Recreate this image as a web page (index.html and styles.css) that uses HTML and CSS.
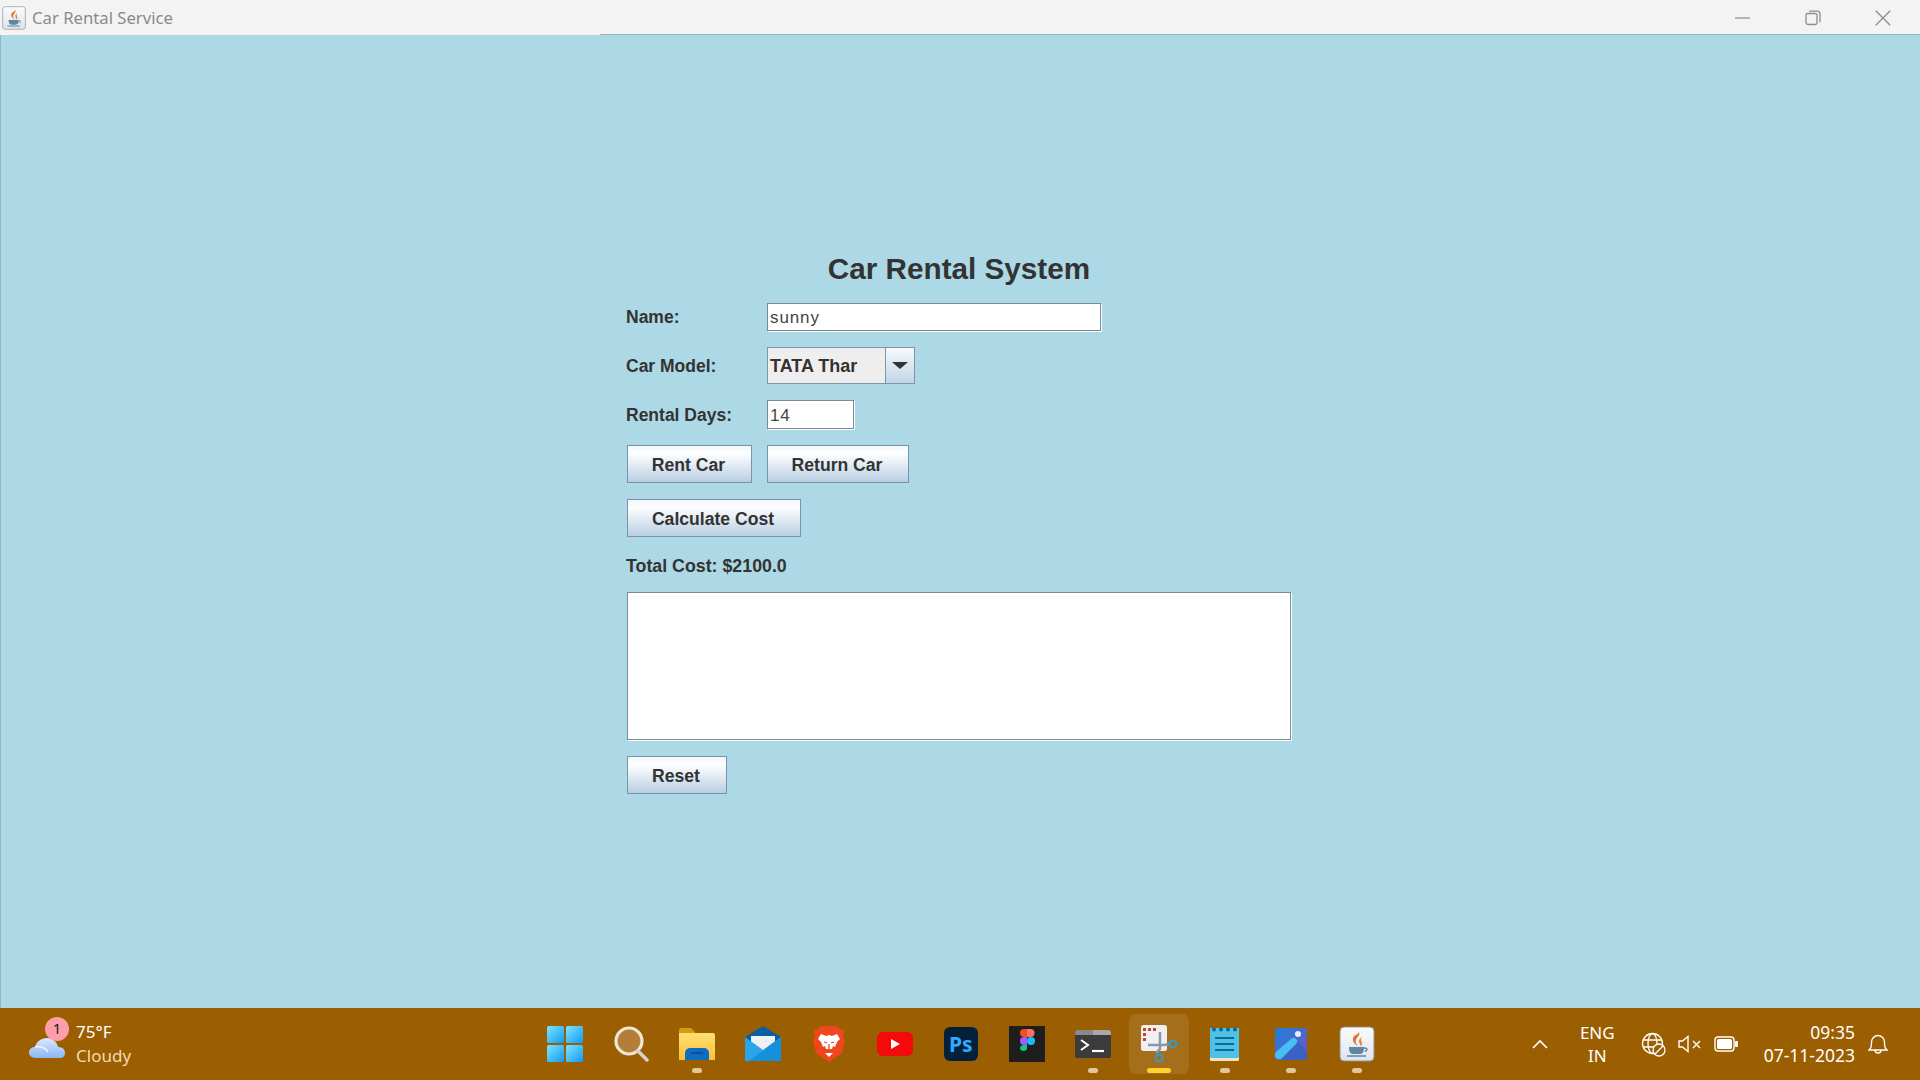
FILE: index.html
```html
<!DOCTYPE html>
<html lang="en">
<head>
  <meta charset="UTF-8">
  <title>Car Rental Service</title>
  <link rel="stylesheet" href="styles.css">
</head>
<body>
  <svg class="defs" width="0" height="0">
    <defs>
      <linearGradient id="javaBg" x1="0" y1="0" x2="0" y2="1"><stop offset="0" stop-color="#fbfbfb"/><stop offset="1" stop-color="#dfe3ea"/></linearGradient>
      <linearGradient id="startBlue" x1="0" y1="0" x2="1" y2="1"><stop offset="0" stop-color="#7fe3ff"/><stop offset="1" stop-color="#0f9bf2"/></linearGradient>
      <linearGradient id="folder" x1="0" y1="0" x2="0" y2="1"><stop offset="0" stop-color="#ffdf72"/><stop offset="1" stop-color="#fbc13a"/></linearGradient>
      <linearGradient id="photoBg" x1="0" y1="0" x2="1" y2="1"><stop offset="0" stop-color="#1f7fdc"/><stop offset="1" stop-color="#6f55c0"/></linearGradient>
      <linearGradient id="cloud" x1="0" y1="0" x2="0" y2="1"><stop offset="0" stop-color="#dbe8ff"/><stop offset="1" stop-color="#8db6f5"/></linearGradient>
      <symbol id="java" viewBox="0 0 36 36">
        <rect x="1" y="1" width="34" height="34" rx="4" fill="url(#javaBg)" stroke="#8b8f96"/>
        <path d="M20 6c2 4-5 6-3 11 1 2 2 3 2 3-2-1-6-4-5-8 .8-3 5-3 6-6z" fill="#e2702a"/>
        <path d="M23 11c-3 2-4 4-2 7 .5 1 .3 2-.5 2.500 2-.5 3.500-2.500 2-5-.7-1.500-.4-3 .5-4.500z" fill="#e8863c"/>
        <path d="M10 21h15v2c0 3-2 5-4 5h-7c-2 0-4-2-4-5z" fill="#5f86a3"/>
        <path d="M25 22c3-.5 4 2 1 3.500" fill="none" stroke="#5f86a3" stroke-width="1.500"/>
        <path d="M8 30h19" stroke="#5f86a3" stroke-width="1.500"/>
      </symbol>
    </defs>
  </svg>

  <header class="title-bar">
    <div class="title-left">
      <svg class="title-icon" width="24" height="24"><use href="#java"/></svg>
      <span class="title-text">Car Rental Service</span>
    </div>
    <div class="window-btns">
      <svg width="16" height="16" viewBox="0 0 16 16"><path d="M0 8h15" stroke="#8d8d8d" stroke-width="1.200"/></svg>
      <svg width="16" height="16" viewBox="0 0 16 16" fill="none" stroke="#8d8d8d" stroke-width="1.300"><rect x="1" y="3.500" width="11" height="11" rx="2"/><path d="M4 1.200h8a3 3 0 0 1 3 3v8"/></svg>
      <svg width="16" height="16" viewBox="0 0 16 16"><path d="M.8.800l14.400 14.400M15.200.800L.8 15.200" stroke="#8d8d8d" stroke-width="1.300"/></svg>
    </div>
  </header>

  <main class="app">
    <form class="rental-form">
      <h1 class="heading">Car Rental System</h1>

      <div class="row">
        <label class="label" for="name">Name:</label>
        <input class="field field-name" id="name" type="text" value="sunny">
      </div>

      <div class="row">
        <span class="label">Car Model:</span>
        <div class="combo">
          <span class="combo-value">TATA Thar</span>
          <span class="combo-arrow"><span class="triangle"></span></span>
        </div>
      </div>

      <div class="row">
        <label class="label" for="days">Rental Days:</label>
        <input class="field field-days" id="days" type="text" value="14">
      </div>

      <div class="row btn-row">
        <button type="button" class="btn btn-rent">Rent Car</button>
        <button type="button" class="btn btn-return">Return Car</button>
      </div>

      <div class="row">
        <button type="button" class="btn btn-calc">Calculate Cost</button>
      </div>

      <div class="total">Total Cost: $2100.0</div>

      <textarea class="output"></textarea>

      <div class="row">
        <button type="button" class="btn btn-reset">Reset</button>
      </div>
    </form>
  </main>

  <footer class="taskbar">
    <div class="weather">
      <div class="weather-icon">
        <svg width="38" height="24" viewBox="0 0 38 24"><path d="M8 23C3 23 1 20 1 17.500 1 14 4 12 7 12 8 7 13 3 19 3c6 0 10 4 11 9 4 0 7 2 7 6 0 3-2 5-5 5z" fill="url(#cloud)"/><path d="M7 12c5-1 10 0 13 5" fill="none" stroke="#eef4ff" stroke-width="1.500"/></svg>
        <span class="badge">1</span>
      </div>
      <div class="weather-text">
        <span class="temp">75°F</span>
        <span class="cond">Cloudy</span>
      </div>
    </div>

    <div class="task-icons">
      <div class="task">
        <svg width="36" height="36" viewBox="0 0 36 36" fill="url(#startBlue)"><rect x="0" y="0" width="17" height="17" rx="1.500"/><rect x="19" y="0" width="17" height="17" rx="1.500"/><rect x="0" y="19" width="17" height="17" rx="1.500"/><rect x="19" y="19" width="17" height="17" rx="1.500"/></svg>
      </div>
      <div class="task">
        <svg width="36" height="36" viewBox="0 0 36 36"><circle cx="16" cy="15" r="13" fill="#b37f38" stroke="#eee6da" stroke-width="3.200"/><path d="M25 25l9 9" stroke="#d9d2c6" stroke-width="3.500" stroke-linecap="round"/></svg>
      </div>
      <div class="task">
        <svg width="36" height="36" viewBox="0 0 36 36"><path d="M0 4a2 2 0 0 1 2-2h10l4 4v4H0z" fill="#d99a10"/><path d="M0 7h34a2 2 0 0 1 2 2v25H0z" fill="url(#folder)"/><path d="M6 34v-7a5 5 0 0 1 5-5h14a5 5 0 0 1 5 5v7z" fill="#0f6cc4"/><path d="M12 27h12" stroke="#0a4a8a" stroke-width="1.500"/></svg>
        <span class="dot"></span>
      </div>
      <div class="task">
        <svg width="36" height="36" viewBox="0 0 36 36"><path d="M0 11L18 0l18 11v6H0z" fill="#0a5ea8"/><path d="M6 10h24v12L18 26 6 22z" fill="#eef1f4"/><path d="M0 11l18 13 18-13v24H0z" fill="#2aa4ea"/><path d="M36 35H4l32-24z" fill="#1590dc"/></svg>
      </div>
      <div class="task">
        <svg width="32" height="36" viewBox="0 0 32 36"><path d="M8 0h16l4 4 4-1-2 7 2 4-3 13-13 9-13-9L0 14l2-4-2-7 4 1z" fill="#f0461e"/><path d="M8 8l5 2 3-1 3 1 5-2 3 5-3 3-2 5-2-1-1 3h-6l-1-3-2 1-2-5-3-3z" fill="#fff"/><path d="M11 16l3 1M21 16l-3 1M16 18v5" stroke="#f0461e" stroke-width="1.300"/><path d="M12 27h8l-4 4z" fill="#fff"/></svg>
      </div>
      <div class="task">
        <svg width="36" height="24" viewBox="0 0 36 24"><rect width="36" height="24" rx="6" fill="#f40a0a"/><path d="M14 7l9 5-9 5z" fill="#fff"/></svg>
      </div>
      <div class="task">
        <svg width="34" height="34" viewBox="0 0 34 34"><rect width="34" height="34" rx="6" fill="#04203b"/><text class="ps" x="5" y="25">Ps</text></svg>
      </div>
      <div class="task">
        <svg width="36" height="36" viewBox="0 0 36 36"><rect width="36" height="36" fill="#1e1e1e"/><path d="M11 7a4 4 0 0 1 4-4h3v8h-3a4 4 0 0 1-4-4z" fill="#f24e1e"/><path d="M18 3h3.500a4 4 0 0 1 0 8H18z" fill="#ff7262"/><path d="M11 15a4 4 0 0 1 4-4h3v8h-3a4 4 0 0 1-4-4z" fill="#a259ff"/><circle cx="22" cy="15" r="4" fill="#1abcfe"/><path d="M11 23a4 4 0 0 1 4-4h3v4a4 4 0 0 1-7 0z" fill="#0acf83"/></svg>
      </div>
      <div class="task">
        <svg width="36" height="28" viewBox="0 0 36 28"><rect width="36" height="28" rx="2.500" fill="#3b3b3b"/><path d="M0 2.500A2.500 2.500 0 0 1 2.500 0H18v5H0z" fill="#8a8a8a"/><path d="M18 0h15.500A2.500 2.500 0 0 1 36 2.500V5H18z" fill="#a8a8a8"/><path d="M6 10l7 5-7 5" fill="none" stroke="#fff" stroke-width="2"/><path d="M17 21h12" stroke="#fff" stroke-width="2.200"/></svg>
        <span class="dot"></span>
      </div>
      <div class="task task-active">
        <svg width="38" height="38" viewBox="0 0 38 38"><rect x="1" y="0" width="26" height="26" rx="2.500" fill="#eef0f4"/><g fill="#c0462c"><rect x="3" y="3" width="3" height="3"/><rect x="8" y="3" width="3" height="3"/><rect x="13" y="3" width="3" height="3"/><rect x="3" y="8" width="3" height="3"/><rect x="3" y="13" width="3" height="3"/></g><path d="M20 7v17l-4 4M8 20h17l5-2" fill="none" stroke="#8b97a5" stroke-width="2.500"/><circle cx="33" cy="19" r="3.500" fill="none" stroke="#2f9bd0" stroke-width="2"/><circle cx="19" cy="33" r="3.500" fill="none" stroke="#2f9bd0" stroke-width="2"/></svg>
        <span class="dot dot-active"></span>
      </div>
      <div class="task">
        <svg width="30" height="34" viewBox="0 0 30 34"><rect y="1" width="29" height="33" rx="1.500" fill="#f2e2c8"/><rect y="1" width="29" height="30" rx="1.500" fill="#4fc1e6"/><g fill="#0e6a8e"><circle cx="4" cy="2.500" r="2"/><circle cx="11" cy="2.500" r="2"/><circle cx="18" cy="2.500" r="2"/><circle cx="25" cy="2.500" r="2"/></g><path d="M5 11h19M5 17h19M5 23h19" stroke="#0e6a8e" stroke-width="2"/></svg>
        <span class="dot"></span>
      </div>
      <div class="task">
        <svg width="32" height="32" viewBox="0 0 32 32"><rect width="32" height="32" rx="3" fill="url(#photoBg)"/><circle cx="23" cy="6" r="3" fill="#e9eefc"/><path d="M6 32L19 10l13 13v6a3 3 0 0 1-3 3z" fill="#3a62c4"/><path d="M1 24L16 11a3.500 3.500 0 0 1 5 5L7 30a4 4 0 0 1-6-6z" fill="#46c0f2"/></svg>
        <span class="dot"></span>
      </div>
      <div class="task">
        <svg width="36" height="36"><use href="#java"/></svg>
        <span class="dot"></span>
      </div>
    </div>

    <div class="tray">
      <svg class="tray-chevron" width="16" height="10" viewBox="0 0 16 10"><path d="M1 9l7-7 7 7" fill="none" stroke="#fff" stroke-width="1.600"/></svg>
      <div class="lang"><span>ENG</span><span>IN</span></div>
      <div class="tray-icons">
        <svg width="25" height="25" viewBox="0 0 25 25" fill="none" stroke="#fff" stroke-width="1.300"><circle cx="11.500" cy="11.500" r="10"/><ellipse cx="11.500" cy="11.500" rx="4.500" ry="10"/><path d="M2 8h19M2 15h19"/><circle cx="18" cy="18" r="6" fill="#9b5e00"/><path d="M14 22l8-8"/></svg>
        <svg width="24" height="18" viewBox="0 0 24 18" fill="none" stroke="#fff" stroke-width="1.400"><path d="M1 6h3.500L10 1.500v15L4.500 12H1z"/><path d="M15 6l7 7M22 6l-7 7"/></svg>
        <svg width="24" height="16" viewBox="0 0 24 16"><rect x="1" y="1" width="19" height="14" rx="3" fill="none" stroke="#fff" stroke-width="1.400"/><rect x="3" y="3" width="15" height="10" rx="1.500" fill="#fff"/><rect x="21" y="5" width="3" height="6" rx="1" fill="#fff"/></svg>
      </div>
      <div class="clock"><span>09:35</span><span>07-11-2023</span></div>
      <svg class="bell" width="20" height="22" viewBox="0 0 20 22" fill="none" stroke="#fff" stroke-width="1.400"><path d="M1 17c2-2 2.500-3 2.500-8a6.500 6.500 0 0 1 13 0c0 5 .5 6 2.500 8z"/><path d="M7 17a3 3 0 0 0 6 0"/></svg>
    </div>
  </footer>
</body>
</html>
```

FILE: styles.css
```css
* {
  box-sizing: border-box;
}
html, body {
  height: 100%;
}
body {
  margin: 0;
  display: flex;
  flex-direction: column;
  overflow: hidden;
  background-color: #add8e6;
  font-family: "Liberation Sans", Arial, sans-serif;
}
.defs {
  position: absolute;
}

/* title bar */
.title-bar {
  height: 35px;
  flex: none;
  display: flex;
  align-items: center;
  justify-content: space-between;
  background-color: #f3f3f3;
  background-image: linear-gradient(to right, transparent 600px, #96b4c2 600px);
  background-size: 100% 1px;
  background-position: bottom;
  background-repeat: no-repeat;
}
.title-left {
  display: flex;
  align-items: center;
  padding-left: 2px;
}
.title-icon {
  margin-right: 6px;
}
.title-text {
  font-family: "Noto Sans", sans-serif;
  font-size: 16.700px;
  color: #8a8a8a;
}
.window-btns {
  display: flex;
  align-items: center;
  gap: 54px;
  padding-right: 29px;
}

/* form */
.app {
  flex: 1;
  display: flex;
  justify-content: center;
  padding-top: 218px;
  border-left: 1px solid #96b4c2;
}
.rental-form {
  width: 664px;
  display: flex;
  flex-direction: column;
  gap: 16px;
  margin-right: 3px;
}
.heading {
  margin: 0;
  height: 34px;
  line-height: 32px;
  text-align: center;
  font-size: 29.700px;
  font-weight: bold;
  color: #333;
}
.row {
  display: flex;
  align-items: center;
}
.btn-row {
  gap: 15px;
}
.label {
  width: 141px;
  margin-left: -1px;
  padding-top: 1px;
  font-size: 17.500px;
  font-weight: bold;
  color: #333;
}
.field {
  height: 28px;
  padding: 2px 2px 0;
  border: 1px solid #7a8a99;
  border-radius: 0;
  box-shadow: 1px 1px 0 #fff;
  background-color: #fff;
  outline: none;
  font-family: "Liberation Sans", Arial, sans-serif;
  font-size: 17px;
  letter-spacing: 0.9px;
  color: #444;
}
.field-name {
  width: 334px;
}
.field-days {
  width: 87px;
  height: 29px;
}
.combo {
  width: 148px;
  height: 37px;
  display: flex;
  border: 1px solid #7f95a8;
}
.combo-value {
  flex: 1;
  display: flex;
  align-items: center;
  padding: 1px 0 0 2px;
  background-color: #eeeeee;
  font-size: 18px;
  font-weight: bold;
  color: #333;
}
.combo-arrow {
  width: 29px;
  display: flex;
  align-items: center;
  justify-content: center;
  border-left: 1px solid #7f95a8;
  background: linear-gradient(#f6f9fc, #c3d5e6);
}
.triangle {
  width: 0;
  height: 0;
  border-left: 8px solid transparent;
  border-right: 8px solid transparent;
  border-top: 7px solid #333;
}
.btn {
  height: 38px;
  padding: 2px 2px 0 0;
  border: 1px solid #7a93aa;
  background: linear-gradient(#f3f7fb, #fdfeff 22%, #b9cee2);
  font-family: "Liberation Sans", Arial, sans-serif;
  font-size: 17.600px;
  font-weight: bold;
  color: #333;
}
.btn-rent {
  width: 125px;
}
.btn-return {
  width: 142px;
}
.btn-calc {
  width: 174px;
}
.btn-reset {
  width: 100px;
}
.total {
  height: 23px;
  margin-left: -1px;
  line-height: 26px;
  font-size: 17.800px;
  font-weight: bold;
  color: #333;
}
.output {
  width: 664px;
  height: 148px;
  padding: 0;
  resize: none;
  border: 1px solid #7a8a99;
  border-radius: 0;
  box-shadow: 1px 1px 0 #fff;
  background-color: #fff;
  outline: none;
}

/* taskbar */
.taskbar {
  height: 72px;
  flex: none;
  display: grid;
  grid-template-columns: 1fr auto 1fr;
  align-items: center;
  background-color: #9b5e00;
  color: #fff;
  font-family: "Noto Sans", sans-serif;
}
.weather {
  display: flex;
  align-items: center;
  gap: 10px;
  padding-left: 28px;
}
.weather-icon {
  position: relative;
  width: 38px;
  height: 24px;
  margin-top: 6px;
}
.badge {
  position: absolute;
  top: -18px;
  left: 17px;
  width: 24px;
  height: 24px;
  border-radius: 50%;
  background-color: #ff9dab;
  color: #222;
  font-size: 15px;
  line-height: 22px;
  text-align: center;
}
.weather-text {
  display: flex;
  flex-direction: column;
  font-size: 17px;
  line-height: 24px;
}
.cond {
  color: #f4dcb0;
}
.task-icons {
  display: flex;
  padding-left: 2px;
}
.task {
  position: relative;
  width: 66px;
  height: 60px;
  display: flex;
  align-items: center;
  justify-content: center;
}
.task-active {
  border-style: solid;
  border-color: transparent;
  border-width: 0 3px;
  border-radius: 8px;
  background-color: rgba(255, 255, 255, 0.1);
  background-clip: padding-box;
}
.dot {
  position: absolute;
  left: 28px;
  bottom: 1px;
  width: 10px;
  height: 5px;
  border-radius: 3px;
  background-color: #e3c79a;
}
.dot-active {
  left: 18px;
  width: 24px;
  background-color: #ffd22e;
}
.ps {
  font-family: "Noto Sans", sans-serif;
  font-size: 21px;
  font-weight: bold;
  fill: #31a8ff;
}
.tray {
  display: flex;
  align-items: center;
  justify-content: flex-end;
  padding-right: 32px;
}
.tray-chevron {
  margin-right: 32px;
}
.lang {
  display: flex;
  flex-direction: column;
  align-items: center;
  margin-right: 26px;
  font-size: 17px;
  line-height: 23px;
}
.tray-icons {
  display: flex;
  align-items: center;
  gap: 12px;
  margin-right: 26px;
}
.clock {
  display: flex;
  flex-direction: column;
  align-items: flex-end;
  margin-right: 13px;
  font-size: 17.500px;
  line-height: 23px;
}
```
